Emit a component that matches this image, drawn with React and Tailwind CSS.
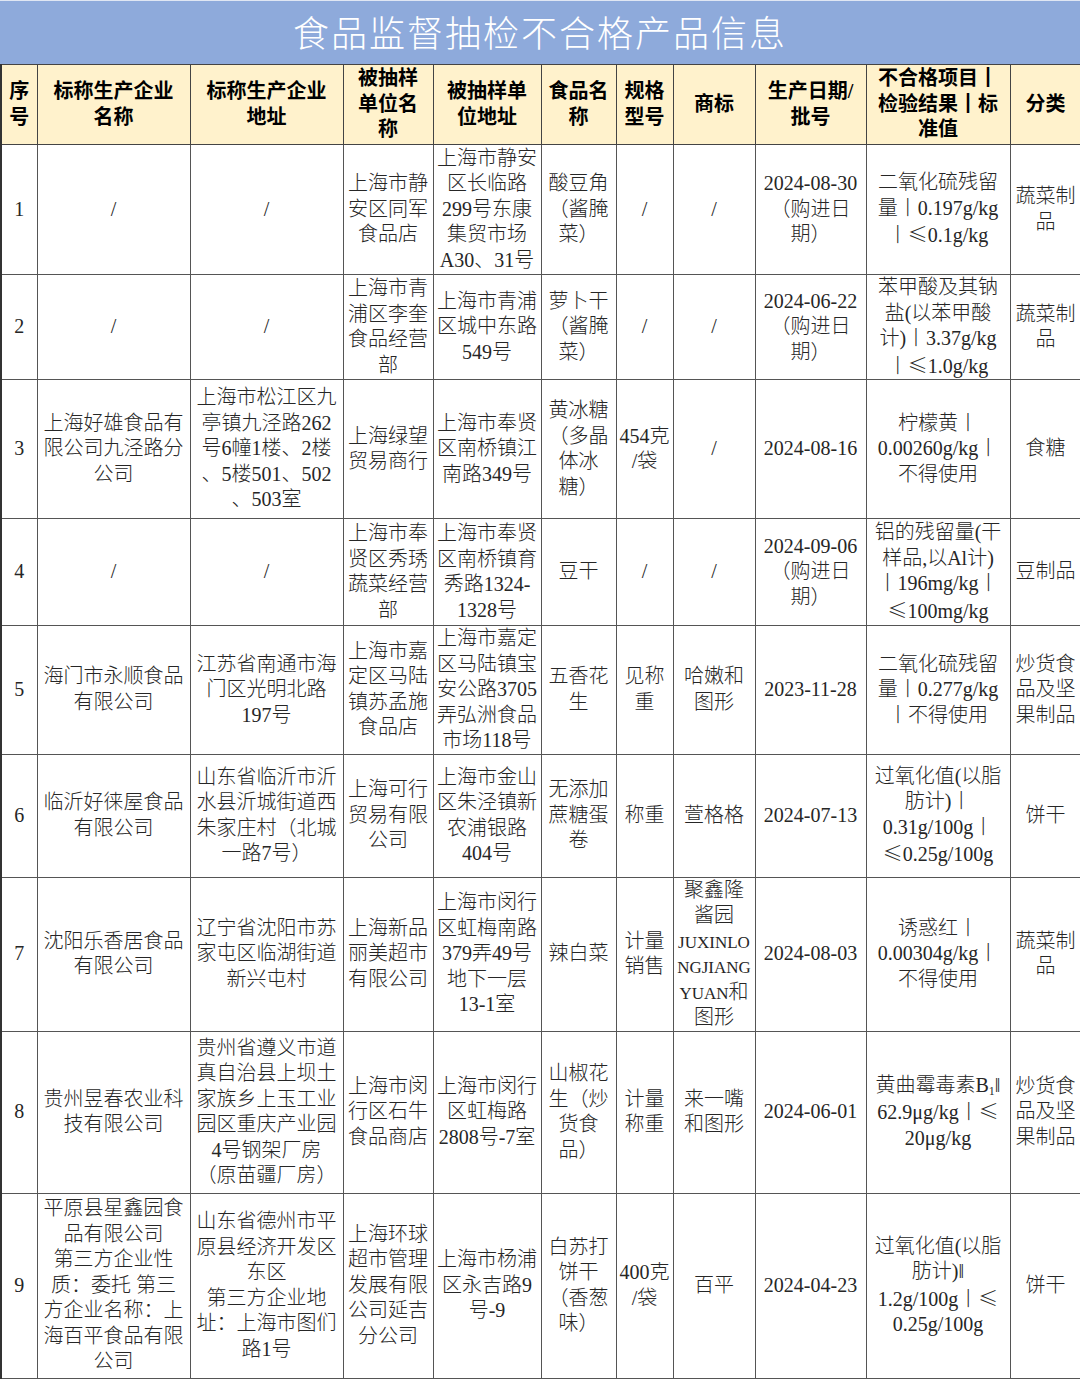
import React from "react";

const cols = [36, 153, 153, 90, 108, 75, 57, 82, 111, 144, 71];

const header = [
  "序\n号",
  "标称生产企业\n名称",
  "标称生产企业\n地址",
  "被抽样\n单位名\n称",
  "被抽样单\n位地址",
  "食品名\n称",
  "规格\n型号",
  "商标",
  "生产日期/\n批号",
  "不合格项目┃\n检验结果┃标\n准值",
  "分类",
];

// ≤ is drawn wide in the picture, so take it from the CJK font
const cjk = { fontFamily: '"Noto Sans CJK SC", sans-serif' };
const fmt = (s) =>
  typeof s !== "string"
    ? s
    : s.split("≤").map((part, i) => (
        <React.Fragment key={i}>
          {i > 0 && <span style={cjk}>≤</span>}
          {part}
        </React.Fragment>
      ));

const juxin = (
  <>
    聚鑫隆
    <br />
    酱园
    <br />
    <span className="text-[17px] leading-[17px]">JUXINLO</span>
    <br />
    <span className="text-[17px] leading-[17px]">NGJIANG</span>
    <br />
    <span className="text-[17px] leading-[17px]">YUAN</span>和
    <br />
    图形
  </>
);

const b1 = (
  <>
    黄曲霉毒素B
    <span className="text-[12px] leading-[12px] relative top-[3px]">1</span>‖
    <br />
    62.9μg/kg丨<span style={cjk}>≤</span>
    <br />
    20μg/kg
  </>
);

const rows = [
  {
    h: 130,
    cells: [
      "1", "/", "/",
      "上海市静\n安区同军\n食品店",
      "上海市静安\n区长临路\n299号东康\n集贸市场\nA30、31号",
      "酸豆角\n（酱腌\n菜）",
      "/", "/",
      "2024-08-30\n（购进日\n期）",
      "二氧化硫残留\n量丨0.197g/kg\n丨≤0.1g/kg",
      "蔬菜制\n品",
    ],
  },
  {
    h: 105,
    cells: [
      "2", "/", "/",
      "上海市青\n浦区李奎\n食品经营\n部",
      "上海市青浦\n区城中东路\n549号",
      "萝卜干\n（酱腌\n菜）",
      "/", "/",
      "2024-06-22\n（购进日\n期）",
      "苯甲酸及其钠\n盐(以苯甲酸\n计)丨3.37g/kg\n丨≤1.0g/kg",
      "蔬菜制\n品",
    ],
  },
  {
    h: 139,
    cells: [
      "3",
      "上海好雄食品有\n限公司九泾路分\n公司",
      "上海市松江区九\n亭镇九泾路262\n号6幢1楼、2楼\n、5楼501、502\n、503室",
      "上海绿望\n贸易商行",
      "上海市奉贤\n区南桥镇江\n南路349号",
      "黄冰糖\n（多晶\n体冰\n糖）",
      "454克\n/袋",
      "/",
      "2024-08-16",
      "柠檬黄丨\n0.00260g/kg丨\n不得使用",
      "食糖",
    ],
  },
  {
    h: 107,
    cells: [
      "4", "/", "/",
      "上海市奉\n贤区秀琇\n蔬菜经营\n部",
      "上海市奉贤\n区南桥镇育\n秀路1324-\n1328号",
      "豆干",
      "/", "/",
      "2024-09-06\n（购进日\n期）",
      "铝的残留量(干\n样品,以Al计)\n丨196mg/kg丨\n≤100mg/kg",
      "豆制品",
    ],
  },
  {
    h: 126,
    cells: [
      "5",
      "海门市永顺食品\n有限公司",
      "江苏省南通市海\n门区光明北路\n197号",
      "上海市嘉\n定区马陆\n镇苏孟施\n食品店",
      "上海市嘉定\n区马陆镇宝\n安公路3705\n弄弘洲食品\n市场118号",
      "五香花\n生",
      "见称\n重",
      "哈嫩和\n图形",
      "2023-11-28",
      "二氧化硫残留\n量丨0.277g/kg\n丨不得使用",
      "炒货食\n品及坚\n果制品",
    ],
  },
  {
    h: 123,
    cells: [
      "6",
      "临沂好徕屋食品\n有限公司",
      "山东省临沂市沂\n水县沂城街道西\n朱家庄村（北城\n一路7号）",
      "上海可行\n贸易有限\n公司",
      "上海市金山\n区朱泾镇新\n农浦银路\n404号",
      "无添加\n蔗糖蛋\n卷",
      "称重",
      "萱格格",
      "2024-07-13",
      "过氧化值(以脂\n肪计)丨\n0.31g/100g丨\n≤0.25g/100g",
      "饼干",
    ],
  },
  {
    h: 152,
    cells: [
      "7",
      "沈阳乐香居食品\n有限公司",
      "辽宁省沈阳市苏\n家屯区临湖街道\n新兴屯村",
      "上海新品\n丽美超市\n有限公司",
      "上海市闵行\n区虹梅南路\n379弄49号\n地下一层\n13-1室",
      "辣白菜",
      "计量\n销售",
      juxin,
      "2024-08-03",
      "诱惑红丨\n0.00304g/kg丨\n不得使用",
      "蔬菜制\n品",
    ],
  },
  {
    h: 162,
    cells: [
      "8",
      "贵州昱春农业科\n技有限公司",
      "贵州省遵义市道\n真自治县上坝土\n家族乡上玉工业\n园区重庆产业园\n4号钢架厂房\n（原苗疆厂房）",
      "上海市闵\n行区石牛\n食品商店",
      "上海市闵行\n区虹梅路\n2808号-7室",
      "山椒花\n生（炒\n货食\n品）",
      "计量\n称重",
      "来一嘴\n和图形",
      "2024-06-01",
      b1,
      "炒货食\n品及坚\n果制品",
    ],
  },
  {
    h: 185,
    cells: [
      "9",
      "平原县星鑫园食\n品有限公司\n第三方企业性\n质：委托 第三\n方企业名称：上\n海百平食品有限\n公司",
      "山东省德州市平\n原县经济开发区\n东区\n第三方企业地\n址：上海市图们\n路1号",
      "上海环球\n超市管理\n发展有限\n公司延吉\n分公司",
      "上海市杨浦\n区永吉路9\n号-9",
      "白苏打\n饼干\n（香葱\n味）",
      "400克\n/袋",
      "百平",
      "2024-04-23",
      "过氧化值(以脂\n肪计)‖\n1.2g/100g丨≤\n0.25g/100g",
      "饼干",
    ],
  },
];

export default function App() {
  return (
    <div
      className="w-[1080px] h-[1379px] bg-white overflow-hidden"
      style={{ fontFamily: '"Liberation Serif", "Noto Sans CJK SC", serif' }}
    >
      {/* title bar */}
      <div className="h-[64px] bg-[#8eaadb] border-t border-t-[#dfe6f3] flex items-center justify-center">
        <h1 className="text-white text-[36px] tracking-[2px] font-light leading-none pt-1">
          食品监督抽检不合格产品信息
        </h1>
      </div>

      <table className="table-fixed border-collapse w-[1080px] border-l-2 border-l-[#333]">
        <colgroup>
          {cols.map((w, i) => (
            <col key={i} style={{ width: w }} />
          ))}
        </colgroup>
        <thead>
          <tr className="h-[80px] bg-[#fff2cc]">
            {header.map((t, i) => (
              <th
                key={i}
                className="border border-[#444] px-0.5 py-0 text-center align-middle whitespace-pre-line font-bold text-[20px] leading-[25.5px] text-black"
              >
                {t}
              </th>
            ))}
          </tr>
        </thead>
        <tbody>
          {rows.map((r, ri) => (
            <tr key={ri} style={{ height: r.h }}>
              {r.cells.map((c, ci) => (
                <td
                  key={ci}
                  className="border border-[#555] px-0.5 py-0 text-center align-middle whitespace-pre-line text-[20px] leading-[25.5px] text-[#262626] font-light"
                >
                  {fmt(c)}
                </td>
              ))}
            </tr>
          ))}
        </tbody>
      </table>
    </div>
  );
}
